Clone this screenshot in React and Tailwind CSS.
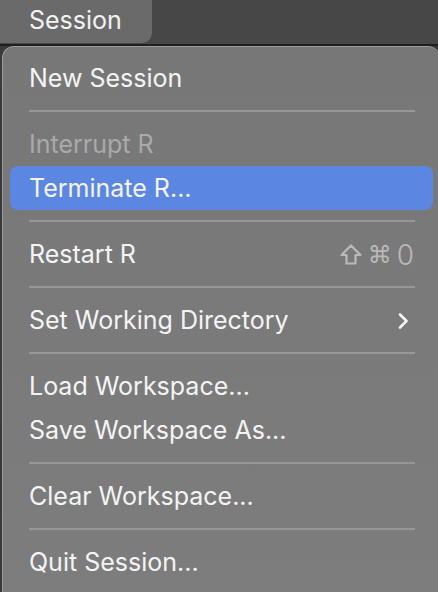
import React from 'react'

const Separator = () => (
  <div className="h-[22px] flex items-center pl-[26px] pr-[25px]">
    <div className="h-[2px] w-full bg-[#979797]" />
  </div>
)

const Item = ({ label, disabled, active, right }) => (
  <div
    className={`h-[44px] ml-[7px] mr-[7px] pl-[19px] pr-[19px] rounded-[8px] flex items-center justify-between ${
      active ? 'bg-[#5b87e3]' : ''
    }`}
  >
    <span className={`pt-[2px] ${disabled ? 'text-[#aaaaaa]' : 'text-[#f4f4f4]'}`}>{label}</span>
    {right}
  </div>
)

const Shortcut = () => (
  <span className="flex items-center gap-[5px] text-[#b9b9b9] pt-[2px]">
    <svg width="24" height="24" viewBox="0 0 24 24" fill="none" stroke="currentColor" strokeWidth="2.2" strokeLinejoin="round">
      <path d="M12 2.5 L2.5 12 H7.5 V20.5 H16.5 V12 H21.5 Z" />
    </svg>
    <span className="text-[24px] leading-none" style={{ fontFamily: '"DejaVu Sans", sans-serif' }}>⌘</span>
    <span className="text-[28px] leading-none font-light">0</span>
  </span>
)

const Chevron = () => (
  <svg width="12" height="18" viewBox="0 0 12 18" fill="none" stroke="#f4f4f4" strokeWidth="2.6" strokeLinecap="round" strokeLinejoin="round" className="mr-[5px] mt-[2px]">
    <path d="M3 2.5 L9.5 9 L3 15.5" />
  </svg>
)

export default function App() {
  return (
    <div className="w-[438px] h-[592px] overflow-hidden bg-[#3a3a3a] text-[25px] font-['Inter',sans-serif]">
      <div className="h-[44px] bg-[#474747] flex">
        <div className="w-[152px] h-[43px] bg-[#6a6a6a] rounded-br-[10px] flex items-center pl-[29px] pb-[2px] text-[#f2f2f2]">
          Session
        </div>
      </div>
      <div className="h-[2px] bg-[#1f1f1f]" />
      <div className="ml-[2px] w-[438px] h-[560px] rounded-t-[12px] rounded-bl-[12px] border-t border-l border-[#9c9c9c] bg-gradient-to-b from-[#777777] to-[#7d7d7d] pt-[9px]">
        <Item label="New Session" />
        <Separator />
        <Item label="Interrupt R" disabled />
        <Item label="Terminate R..." active />
        <Separator />
        <Item label="Restart R" right={<Shortcut />} />
        <Separator />
        <Item label="Set Working Directory" right={<Chevron />} />
        <Separator />
        <Item label="Load Workspace..." />
        <Item label="Save Workspace As..." />
        <Separator />
        <Item label="Clear Workspace..." />
        <Separator />
        <Item label="Quit Session..." />
      </div>
    </div>
  )
}
